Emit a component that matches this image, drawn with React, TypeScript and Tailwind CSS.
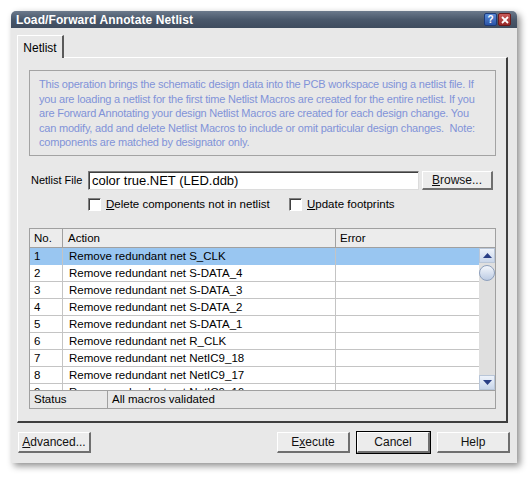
import type { ReactNode } from "react";

const rows = [
	"Remove redundant net S_CLK",
	"Remove redundant net S-DATA_4",
	"Remove redundant net S-DATA_3",
	"Remove redundant net S-DATA_2",
	"Remove redundant net S-DATA_1",
	"Remove redundant net R_CLK",
	"Remove redundant net NetIC9_18",
	"Remove redundant net NetIC9_17",
	"Remove redundant net NetIC9_16",
];

const infoLines = [
	"This operation brings the schematic design data into the PCB workspace using a netlist file. If",
	"you are loading a netlist for the first time Netlist Macros are created for the entire netlist. If you",
	"are Forward Annotating your design Netlist Macros are created for each design change. You",
	"can modify, add and delete Netlist Macros to include or omit particular design changes.  Note:",
	"components are matched by designator only.",
];

function Btn({
	children,
	className = "",
	isDefault = false,
}: {
	children: ReactNode;
	className?: string;
	isDefault?: boolean;
}) {
	return (
		<button
			type="button"
			className={`h-[23px] w-[75px] font-normal ${
				isDefault ? "border border-black" : "border border-transparent"
			} ${className}`}
		>
			<span className="flex h-full w-full items-center justify-center border-t border-l border-b-2 border-r-2 border-t-white border-l-white border-b-[#6f6f6f] border-r-[#6f6f6f] bg-[#ececec] text-[12px] font-normal text-[#111]">
				{children}
			</span>
		</button>
	);
}

function Checkbox({ label, mnemonic }: { label: string; mnemonic: string }) {
	return (
		<label className="flex items-center gap-[5px]">
			<span className="h-[13px] w-[13px] border border-t-[#808080] border-l-[#808080] border-b-white border-r-white bg-white shadow-[inset_1px_1px_0_#404040]" />
			<span>
				<span className="underline">{mnemonic}</span>
				{label}
			</span>
		</label>
	);
}

function ScrollArrow({ down = false }: { down?: boolean }) {
	return (
		<div className="flex h-[15px] w-[16px] items-center justify-center border border-[#b9c6d8] bg-gradient-to-b from-[#eef3fb] to-[#c9d6ea]">
			<svg width="9" height="5" viewBox="0 0 9 5">
				<path
					d={down ? "M0 0 L9 0 L4.5 5 Z" : "M0 5 L9 5 L4.5 0 Z"}
					fill="#2a3f86"
				/>
			</svg>
		</div>
	);
}

export default function App() {
	return (
		<div
			className="h-[477px] w-[532px] bg-white pt-[11px] pl-[11px] text-[11px] text-black"
			style={{ fontFamily: '"Liberation Sans", Arial, sans-serif' }}
		>
			<div className="flex h-[452px] w-[506px] flex-col rounded-t-[5px] bg-[#e8e8e8] shadow-[3px_3px_7px_rgba(0,0,0,0.45)]">
				{/* Title bar */}
				<div className="flex h-[17px] items-center justify-between rounded-t-[5px] bg-gradient-to-b from-[#6c7a8c] via-[#4a586b] to-[#3f4c5e] pr-[6px] pl-[5px]">
					<span className="text-[12px] font-bold tracking-[0.1px] text-white">
						Load/Forward Annotate Netlist
					</span>
					<div className="flex gap-[1px]">
						<div className="flex h-[13px] w-[13px] items-center justify-center rounded-[2px] border border-[#1c3a78] bg-gradient-to-b from-[#5b8ad6] to-[#2b55a8] text-[10px] font-bold leading-none text-white">
							?
						</div>
						<div className="flex h-[13px] w-[13px] items-center justify-center rounded-[2px] border border-[#6b1a1a] bg-gradient-to-b from-[#c85a5a] to-[#992828]">
							<svg width="8" height="8" viewBox="0 0 8 8">
								<path
									d="M1 1 L7 7 M7 1 L1 7"
									stroke="white"
									strokeWidth="1.8"
								/>
							</svg>
						</div>
					</div>
				</div>

				<div className="flex flex-col pt-[7px] pl-[6px]">
					{/* Tab */}
					<div className="relative z-10 -mb-[1px] flex h-[23px] w-[47px] items-center justify-center border-t border-l border-t-white border-l-white border-r-2 border-r-[#5a5a5a] bg-[#e8e8e8] pt-[1px] text-[12px]">
						Netlist
					</div>

					{/* Tab panel */}
					<div className="flex h-[366px] w-[491px] flex-col border-t border-l border-t-white border-l-white border-r-2 border-b-2 border-r-[#3f3f3f] border-b-[#3f3f3f] px-[11px] pt-[12px]">
						{/* Info box */}
						<div className="h-[86px] w-[467px] border border-[#a3a3a3] pt-[6px] pl-[9px] leading-[14.6px] tracking-[-0.2px] text-[#8193d8]">
							{infoLines.map((line) => (
								<div key={line} className="whitespace-pre">
									{line}
								</div>
							))}
						</div>

						{/* Netlist file */}
						<div className="mt-[14px] flex items-center">
							<span className="ml-[2px] w-[57px]">Netlist File</span>
							<div className="flex h-[19px] w-[331px] items-center border border-t-[#7a7a7a] border-l-[#7a7a7a] border-b-[#dcdcdc] border-r-[#dcdcdc] bg-white pl-[3px] text-[13px] shadow-[inset_1px_1px_0_#404040]">
								color true.NET (LED.ddb)
							</div>
							<Btn className="ml-[2px] !h-[21px] !w-[73px]">
								<span className="underline">B</span>rowse...
							</Btn>
						</div>

						{/* Checkboxes */}
						<div className="mt-[6px] flex h-[15px] items-center text-[11.5px]">
							<div className="ml-[59px] w-[201px]">
								<Checkbox mnemonic="D" label="elete components not in netlist" />
							</div>
							<Checkbox mnemonic="U" label="pdate footprints" />
						</div>

						{/* Table */}
						<div className="mt-[16px] flex h-[181px] w-[467px] flex-col border border-[#a0a0a0] bg-[#e8e8e8] text-[11.5px]">
							<div className="flex h-[19px] shrink-0 border-b border-[#a0a0a0] bg-[#ececec]">
								<div className="w-[33px] border-r border-[#a0a0a0] pl-[4px] leading-[18px]">
									No.
								</div>
								<div className="w-[273px] border-r border-[#a0a0a0] pl-[5px] leading-[18px]">
									Action
								</div>
								<div className="flex-1 pl-[4px] leading-[18px]">Error</div>
							</div>
							<div className="flex h-[142px] shrink-0">
								<div className="flex-1 overflow-hidden bg-white">
									{rows.map((action, i) => (
										<div
											key={action}
											className={`flex h-[17px] ${
												i === 0 ? "bg-[#99c6f1]" : "border-b border-[#c4c4c4]"
											}`}
										>
											<div className="w-[33px] border-r border-[#c4c4c4] pl-[4px] leading-[16px]">
												{i + 1}
											</div>
											<div className="w-[273px] border-r border-[#c4c4c4] pl-[6px] leading-[16px]">
												{action}
											</div>
											<div className="flex-1" />
										</div>
									))}
								</div>
								{/* Scrollbar */}
								<div className="flex w-[16px] flex-col justify-between bg-[#dfdfdf]">
									<div className="flex flex-col">
										<ScrollArrow />
										<div className="mt-[2px] h-[16px] w-[16px] rounded-full border border-[#8ea0bd] bg-gradient-to-b from-[#f4f7fc] to-[#bccbe3]" />
									</div>
									<ScrollArrow down />
								</div>
							</div>
							<div className="flex h-[18px] border-t border-[#a0a0a0]">
								<div className="w-[78px] border-r border-[#a0a0a0] pl-[4px] leading-[17px]">
									Status
								</div>
								<div className="flex-1 pl-[4px] leading-[17px]">
									All macros validated
								</div>
							</div>
						</div>
					</div>

					{/* Bottom buttons */}
					<div className="mt-[8px] flex w-[494px] items-center">
						<Btn>
							<span className="underline">A</span>dvanced...
						</Btn>
						<div className="flex-1" />
						<Btn>
							E<span className="underline">x</span>ecute
						</Btn>
						<Btn className="ml-[5px]" isDefault>
							Cancel
						</Btn>
						<Btn className="ml-[5px]">Help</Btn>
					</div>
				</div>
			</div>
		</div>
	);
}
